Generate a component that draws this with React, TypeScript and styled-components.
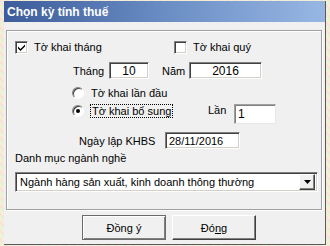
import React from "react";
import styled, { createGlobalStyle, css } from "styled-components";

const GlobalStyle = createGlobalStyle`
  html, body {
    margin: 0;
    padding: 0;
    width: 330px;
    height: 246px;
    overflow: hidden;
    background: repeating-linear-gradient(45deg, #f6efd4 0 2px, #eaf2d6 2px 4px, #f7e2dc 4px 6px);
    font-family: "Liberation Sans", Arial, sans-serif;
    font-size: 11px;
    color: #000;
  }
`;

const sunken = css`
  box-sizing: border-box;
  background: #fff;
  border: 1px solid;
  border-color: #808080 #fff #fff #808080;
  box-shadow: inset 1px 1px 0 #404040, inset -1px -1px 0 #d4d0c8;
`;

const Dialog = styled.div`
  box-sizing: border-box;
  margin: 1px 0 0 4px;
  width: 322px;
  height: 244px;
  background: #f0f0f0;
  border-right: 1px solid #5a5a5a;
  border-bottom: 1px solid #5a5a5a;
  display: flex;
  flex-direction: column;
`;

const TitleBar = styled.div`
  height: 21px;
  display: flex;
  align-items: center;
  padding-left: 3px;
  background: linear-gradient(to right, #3d5c9b, #6a8dc4 50%, #97b7e3);
  color: #fff;
  font-weight: bold;
  font-size: 12px;
`;

const GroupBox = styled.div`
  box-sizing: border-box;
  margin: 8px 0 0 2px;
  width: 316px;
  height: 180px;
  border: 1px solid #a0a0a0;
  box-shadow: inset 1px 1px 0 #fff, 1px 1px 0 #fff;
  display: flex;
  flex-direction: column;
`;

const Row = styled.div<{ $top: number; $left: number; $h: number; $start?: boolean }>`
  display: flex;
  align-items: ${(p) => (p.$start ? "flex-start" : "center")};
  margin-top: ${(p) => p.$top}px;
  padding-left: ${(p) => p.$left}px;
  height: ${(p) => p.$h}px;
`;

const Option = styled.label<{ $w?: number }>`
  display: flex;
  align-items: center;
  gap: 6px;
  height: 14px;
  ${(p) => p.$w && `width: ${p.$w}px;`}
`;

const CheckBox = styled.span`
  ${sunken};
  width: 13px;
  height: 13px;
  display: flex;
  align-items: center;
  justify-content: center;
`;

const Radio = styled.span<{ $on?: boolean }>`
  box-sizing: border-box;
  width: 12px;
  height: 12px;
  border-radius: 50%;
  background: #fff;
  border: 1px solid;
  border-color: #808080 #fff #fff #808080;
  box-shadow: inset 1px 1px 0 #404040;
  display: flex;
  align-items: center;
  justify-content: center;
  margin-right: 1px;
  &::after {
    content: "";
    display: ${(p) => (p.$on ? "block" : "none")};
    width: 4px;
    height: 4px;
    border-radius: 50%;
    background: #000;
  }
`;

const Focus = styled.span`
  outline: 1px dotted #000;
  outline-offset: 0;
  padding: 0 1px;
  line-height: 12px;
`;

const Label = styled.span<{ $w?: number; $ml?: number }>`
  ${(p) => p.$w && `width: ${p.$w}px;`}
  ${(p) => p.$ml && `margin-left: ${p.$ml}px;`}
  white-space: nowrap;
`;

const Field = styled.div<{ $w: number; $h: number; $align?: string; $size?: number; $muted?: boolean }>`
  ${sunken};
  width: ${(p) => p.$w}px;
  height: ${(p) => p.$h}px;
  display: flex;
  align-items: center;
  justify-content: ${(p) => p.$align || "center"};
  padding: 0 3px;
  font-size: ${(p) => p.$size || 12}px;
  ${(p) =>
    p.$muted &&
    css`
      border-color: #a0a0a0 #e8e8e8 #e8e8e8 #a0a0a0;
      box-shadow: inset 1px 1px 0 #808080;
    `}
`;

const Select = styled.div`
  ${sunken};
  width: 303px;
  height: 20px;
  display: flex;
  align-items: center;
  justify-content: space-between;
  padding: 2px 2px 2px 4px;
  font-size: 11px;
`;

const ArrowButton = styled.span`
  box-sizing: border-box;
  width: 16px;
  height: 16px;
  background: #f0f0f0;
  border: 1px solid;
  border-color: #fff #404040 #404040 #fff;
  box-shadow: inset -1px -1px 0 #808080;
  display: flex;
  align-items: center;
  justify-content: center;
`;

const Buttons = styled.div`
  display: flex;
  gap: 6px;
  margin: 5px 0 0 78px;
`;

const Button = styled.button<{ $default?: boolean }>`
  box-sizing: border-box;
  width: 84px;
  height: 25px;
  padding: 0;
  background: #f0f0f0;
  font-family: inherit;
  font-size: 11px;
  color: #000;
  border: 1px solid;
  border-color: #fff #404040 #404040 #fff;
  box-shadow: inset -1px -1px 0 #808080;
  ${(p) =>
    p.$default &&
    css`
      border-color: #6a6a6a;
      box-shadow: inset 1px 1px 0 #fff, inset -1px -1px 0 #808080;
    `}
`;

const Check = () => (
  <svg width="9" height="9" viewBox="0 0 9 9">
    <path d="M1 3.5 L3.5 6 L8 1.5 L8 3.5 L3.5 8 L1 5.5 Z" fill="#000" />
  </svg>
);

const Triangle = () => (
  <svg width="7" height="4" viewBox="0 0 7 4">
    <path d="M0 0 H7 L3.5 4 Z" fill="#000" />
  </svg>
);

export default function App() {
  return (
    <>
      <GlobalStyle />
      <Dialog>
        <TitleBar>Chọn kỳ tính thuế</TitleBar>
        <GroupBox>
          <Row $top={10} $left={8} $h={12}>
            <Option $w={159}>
              <CheckBox>
                <Check />
              </CheckBox>
              Tờ khai tháng
            </Option>
            <Option>
              <CheckBox />
              Tờ khai quý
            </Option>
          </Row>
          <Row $top={9} $left={66} $h={17}>
            <Label $w={36}>Tháng</Label>
            <Field $w={40} $h={17}>10</Field>
            <Label $w={27} $ml={13}>Năm</Label>
            <Field $w={73} $h={17}>2016</Field>
          </Row>
          <Row $top={8} $left={65} $h={12}>
            <Option>
              <Radio />
              Tờ khai lần đầu
            </Option>
          </Row>
          <Row $top={5} $left={65} $h={20} $start>
            <Option $w={136}>
              <Radio $on />
              <Focus>Tờ khai bổ sung</Focus>
            </Option>
            <Label $w={26}>Lần</Label>
            <Field $w={42} $h={20} $align="flex-start" $muted>1</Field>
          </Row>
          <Row $top={8} $left={72} $h={17}>
            <Label $w={86}>Ngày lập KHBS</Label>
            <Field $w={75} $h={17} $align="flex-start" $size={11}>28/11/2016</Field>
          </Row>
          <Row $top={2} $left={8} $h={14}>
            <Label>Danh mục ngành nghề</Label>
          </Row>
          <Row $top={7} $left={8} $h={20}>
            <Select>
              Ngành hàng sản xuất, kinh doanh thông thường
              <ArrowButton>
                <Triangle />
              </ArrowButton>
            </Select>
          </Row>
        </GroupBox>
        <Buttons>
          <Button $default>Đồng ý</Button>
          <Button>
            Đó<u>n</u>g
          </Button>
        </Buttons>
      </Dialog>
    </>
  );
}
